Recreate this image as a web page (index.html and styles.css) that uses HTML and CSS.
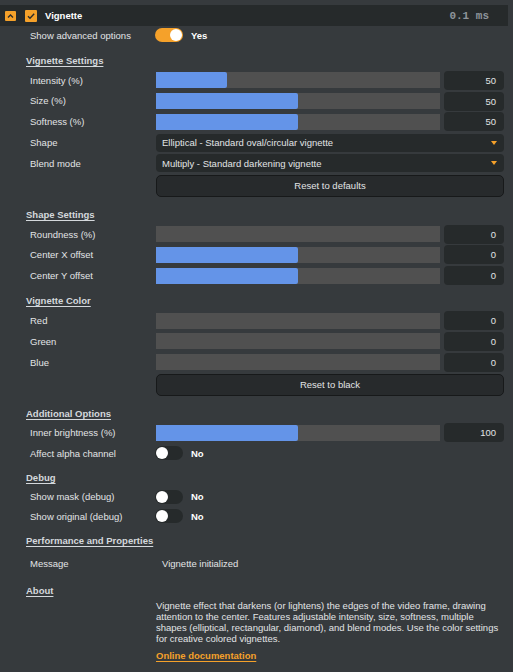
FILE: index.html
```html
<!DOCTYPE html>
<html lang="en">
<head>
<meta charset="UTF-8">
<meta name="viewport" content="width=device-width, initial-scale=1.0">
<title>Vignette</title>
<link rel="stylesheet" href="styles.css">
</head>
<body>

<div class="titlebar">
  <span class="collapse">
    <svg width="11" height="10" viewBox="0 0 11 10"><path d="M3 6.5 L5.5 4 L8 6.5" fill="none" stroke="#2a2a2a" stroke-width="1.3"/></svg>
  </span>
  <span class="check">
    <svg width="12" height="12" viewBox="0 0 12 12"><path d="M3 6.2 L5 8.2 L9.2 3.8" fill="none" stroke="#2a2a2a" stroke-width="1.4"/></svg>
  </span>
  <span class="title">Vignette</span>
  <span class="timing">0.1 ms</span>
</div>

<div class="panel">

  <div class="row">
    <span class="label">Show advanced options</span>
    <div class="ctl"><span class="toggle on"></span><b class="state">Yes</b></div>
  </div>

  <div class="section">Vignette Settings</div>
  <div class="row">
    <span class="label">Intensity (%)</span>
    <div class="ctl"><div class="slider"><div class="fill" style="width: 25%"></div></div><div class="value">50</div></div>
  </div>
  <div class="row">
    <span class="label">Size (%)</span>
    <div class="ctl"><div class="slider"><div class="fill" style="width: 50%"></div></div><div class="value">50</div></div>
  </div>
  <div class="row">
    <span class="label">Softness (%)</span>
    <div class="ctl"><div class="slider"><div class="fill" style="width: 50%"></div></div><div class="value">50</div></div>
  </div>
  <div class="row">
    <span class="label">Shape</span>
    <div class="ctl"><div class="combo">Elliptical - Standard oval/circular vignette<i class="arrow"></i></div></div>
  </div>
  <div class="row">
    <span class="label">Blend mode</span>
    <div class="ctl"><div class="combo">Multiply - Standard darkening vignette<i class="arrow"></i></div></div>
  </div>
  <div class="row btnrow">
    <span class="label"></span>
    <div class="ctl"><button class="btn">Reset to defaults</button></div>
  </div>

  <div class="section">Shape Settings</div>
  <div class="row">
    <span class="label">Roundness (%)</span>
    <div class="ctl"><div class="slider"><div class="fill" style="width: 0%"></div></div><div class="value">0</div></div>
  </div>
  <div class="row">
    <span class="label">Center X offset</span>
    <div class="ctl"><div class="slider"><div class="fill" style="width: 50%"></div></div><div class="value">0</div></div>
  </div>
  <div class="row">
    <span class="label">Center Y offset</span>
    <div class="ctl"><div class="slider"><div class="fill" style="width: 50%"></div></div><div class="value">0</div></div>
  </div>

  <div class="section">Vignette Color</div>
  <div class="row">
    <span class="label">Red</span>
    <div class="ctl"><div class="slider"><div class="fill" style="width: 0%"></div></div><div class="value">0</div></div>
  </div>
  <div class="row">
    <span class="label">Green</span>
    <div class="ctl"><div class="slider"><div class="fill" style="width: 0%"></div></div><div class="value">0</div></div>
  </div>
  <div class="row">
    <span class="label">Blue</span>
    <div class="ctl"><div class="slider"><div class="fill" style="width: 0%"></div></div><div class="value">0</div></div>
  </div>
  <div class="row btnrow">
    <span class="label"></span>
    <div class="ctl"><button class="btn">Reset to black</button></div>
  </div>

  <div class="section">Additional Options</div>
  <div class="row">
    <span class="label">Inner brightness (%)</span>
    <div class="ctl"><div class="slider"><div class="fill" style="width: 50%"></div></div><div class="value">100</div></div>
  </div>
  <div class="row sw">
    <span class="label">Affect alpha channel</span>
    <div class="ctl"><span class="toggle"></span><b class="state">No</b></div>
  </div>

  <div class="section">Debug</div>
  <div class="row sw">
    <span class="label">Show mask (debug)</span>
    <div class="ctl"><span class="toggle"></span><b class="state">No</b></div>
  </div>
  <div class="row sw">
    <span class="label">Show original (debug)</span>
    <div class="ctl"><span class="toggle"></span><b class="state">No</b></div>
  </div>

  <div class="section">Performance and Properties</div>
  <div class="row textrow">
    <span class="label">Message</span>
    <div class="ctl">Vignette initialized</div>
  </div>

  <div class="section about">About</div>
  <div class="row desc">
    <span class="label"></span>
    <div class="ctl">
      <p>Vignette effect that darkens (or lightens) the edges of the video frame, drawing attention to the center. Features adjustable intensity, size, softness, multiple shapes (elliptical, rectangular, diamond), and blend modes. Use the color settings for creative colored vignettes.</p>
      <a class="doclink" href="#">Online documentation</a>
    </div>
  </div>

</div>

</body>
</html>
```

FILE: styles.css
```css
body {
  margin: 0;
  background-color: #363a3d;
  color: #e2e4e6;
  font-family: "Liberation Sans", Arial, sans-serif;
  font-size: 9.5px;
}

/* header bar of the effect */
.titlebar {
  display: flex;
  align-items: center;
  height: 21px;
  margin: 5px 5px 0 0;
  background-color: #262a2b;
}
.collapse {
  display: flex;
  width: 11px;
  height: 10px;
  margin-left: 5px;
  background-color: #f5a12a;
  border-radius: 1px;
}
.check {
  display: flex;
  width: 12px;
  height: 12px;
  margin-left: 9px;
  background-color: #f5a12a;
  border-radius: 1px;
}
.title {
  margin-left: 8px;
  font-weight: bold;
  color: #ffffff;
}
.timing {
  margin-left: auto;
  margin-right: 19px;
  font-family: "Liberation Mono", "DejaVu Sans Mono", monospace;
  font-size: 11px;
  font-weight: bold;
  color: #8e959b;
}

.panel {
  padding-left: 26px;
  display: flex;
  flex-direction: column;
}

.section {
  height: 15px;
  line-height: 15px;
  margin-top: 6px;
  margin-bottom: 3px;
  font-weight: bold;
  color: #d4d8dc;
  text-decoration: underline;
  text-underline-offset: 2px;
}

.row {
  display: flex;
  align-items: center;
  height: 18.8px;
  margin-bottom: 2px;
}
.row.sw {
  height: 17.6px;
}
.label {
  width: 126px;
  padding-left: 4px;
  flex-shrink: 0;
}
.ctl {
  display: flex;
  align-items: center;
  width: 348px;
}

/* sliders */
.slider {
  width: 284px;
  height: 16px;
  background-color: #505050;
}
.fill {
  height: 100%;
  background-color: #6494e8;
  border-radius: 0 2px 2px 0;
}
.value {
  width: 60px;
  height: 19px;
  line-height: 19px;
  margin-left: 4px;
  padding-right: 8px;
  box-sizing: border-box;
  text-align: right;
  background-color: #262a2b;
  border-radius: 4px;
}

/* drop-down */
.combo {
  display: flex;
  align-items: center;
  width: 100%;
  height: 18px;
  padding-left: 6px;
  padding-right: 7px;
  box-sizing: border-box;
  background-color: #262a2b;
  border-radius: 4px;
}
.arrow {
  margin-left: auto;
  width: 0;
  height: 0;
  border-left: 3px solid transparent;
  border-right: 3px solid transparent;
  border-top: 4px solid #f5a12a;
}

.btnrow {
  height: 22px;
  margin-bottom: 4px;
}
.btn {
  width: 348px;
  height: 22px;
  background-color: #272a2c;
  color: #e2e4e6;
  border: 1px solid #17191a;
  border-radius: 5px;
  font-family: inherit;
  font-size: inherit;
  padding: 0;
}

/* on/off switches */
.toggle {
  position: relative;
  width: 28px;
  height: 14px;
  margin-left: -1px;
  border-radius: 7px;
  background-color: #262a2b;
}
.toggle::after {
  content: "";
  position: absolute;
  top: 1px;
  left: 1px;
  width: 12px;
  height: 12px;
  border-radius: 50%;
  background-color: #ffffff;
}
.toggle.on {
  background-color: #f5a12a;
}
.toggle.on::after {
  left: 15px;
}
.state {
  margin-left: 8px;
  color: #ffffff;
}

.textrow {
  margin-top: 3px;
}
.textrow .ctl {
  padding-left: 6px;
}
.about {
  margin-top: 8px;
}
.desc {
  height: auto;
  align-items: flex-start;
}
.desc .ctl {
  display: block;
}
.desc p {
  margin: 0;
  line-height: 10.9px;
}
.doclink {
  display: inline-block;
  margin-top: 5px;
  line-height: 11px;
  font-weight: bold;
  color: #f5a12a;
  text-underline-offset: 2px;
}
```
